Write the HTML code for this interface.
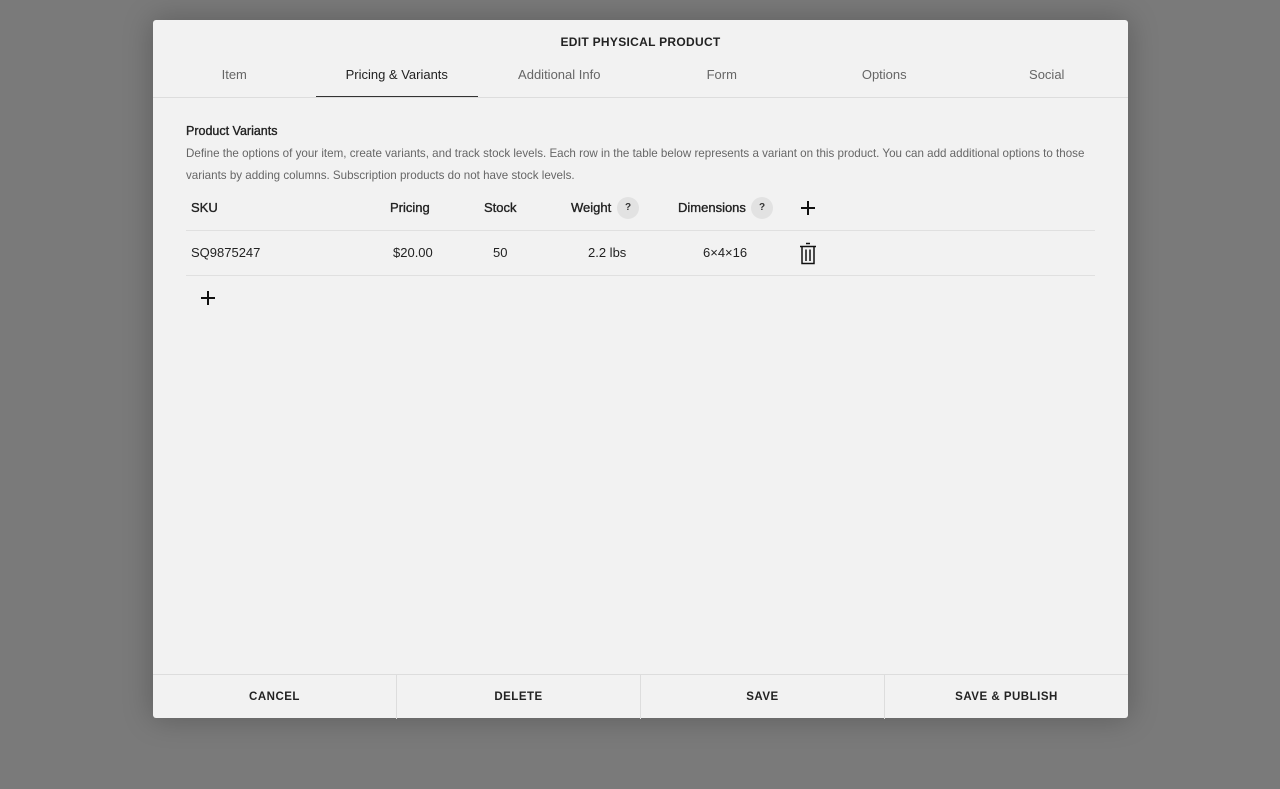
<!DOCTYPE html>
<html><head><style>
body{margin:0;width:1280px;height:789px;background:#7a7a7a;font-family:"Liberation Sans",sans-serif;position:relative;overflow:hidden}
.m{position:absolute;left:153px;top:20px;width:975px;height:698px;background:#f2f2f2;border-radius:3px;box-shadow:0 0 30px rgba(0,0,0,.25)}
.t{position:absolute;top:15px;left:0;width:100%;text-align:center;font-size:12px;font-weight:bold;letter-spacing:.3px;color:#222}
.tabs{position:absolute;top:47px;left:0;width:100%;display:flex;border-bottom:1px solid #ddd;height:30px}
.tabs div{flex:1;text-align:center;font-size:13px;color:#666}
.tabs .a{color:#222;border-bottom:1.5px solid #333}
.ab{position:absolute;font-size:13px;color:#222}
.h{position:absolute;left:33px;top:104px;font-size:12.5px;color:#222;-webkit-text-stroke:.35px #222}
.d{position:absolute;left:33px;top:123px;width:920px;font-size:11.6px;line-height:22px;color:#666}
.hr{position:absolute;left:33px;width:909px;height:1px;background:#e0e0e0}
.hd{-webkit-text-stroke:.35px #222}
.q{position:absolute;width:22px;height:22px;border-radius:50%;background:#e2e2e2;font-size:10px;font-weight:bold;text-align:center;line-height:22px;color:#333}
.f{position:absolute;left:0;top:654px;width:100%;height:44px;border-top:1px solid #ddd;display:flex}
.f div{flex:1;text-align:center;line-height:44px;font-size:11.5px;font-weight:bold;letter-spacing:.5px;color:#222;border-left:1px solid #ddd}
.f div:first-child{border-left:0}
</style></head><body>
<div class="m">
<div class="t">EDIT PHYSICAL PRODUCT</div>
<div class="tabs"><div>Item</div><div class="a">Pricing &amp; Variants</div><div>Additional Info</div><div>Form</div><div>Options</div><div>Social</div></div>
<div class="h">Product Variants</div>
<div class="d">Define the options of your item, create variants, and track stock levels. Each row in the table below represents a variant on this product. You can add additional options to those variants by adding columns. Subscription products do not have stock levels.</div>
<div class="ab hd" style="left:38px;top:180px">SKU</div>
<div class="ab hd" style="left:237px;top:180px">Pricing</div>
<div class="ab hd" style="left:331px;top:180px">Stock</div>
<div class="ab hd" style="left:418px;top:180px">Weight</div>
<div class="q" style="left:464px;top:177px">?</div>
<div class="ab hd" style="left:525px;top:180px">Dimensions</div>
<div class="q" style="left:598px;top:177px">?</div>
<svg style="position:absolute;left:647px;top:180px" width="16" height="16"><path d="M8 1V15M1 8H15" stroke="#111" stroke-width="2"/></svg>
<div class="hr" style="top:210px"></div>
<div class="ab" style="left:38px;top:225px">SQ9875247</div>
<div class="ab" style="left:240px;top:225px">$20.00</div>
<div class="ab" style="left:340px;top:225px">50</div>
<div class="ab" style="left:435px;top:225px">2.2 lbs</div>
<div class="ab" style="left:550px;top:225px">6×4×16</div>
<svg style="position:absolute;left:646px;top:222px" width="18" height="23"><path d="M7 1.5H11M1 4.5H17M3 4.5V21.5H15V4.5M7 7.5V19M11 7.5V19" stroke="#111" stroke-width="1.5" fill="none"/></svg>
<div class="hr" style="top:255px"></div>
<svg style="position:absolute;left:47px;top:270px" width="16" height="16"><path d="M8 1V15M1 8H15" stroke="#111" stroke-width="2"/></svg>
<div class="f"><div>CANCEL</div><div>DELETE</div><div>SAVE</div><div>SAVE &amp; PUBLISH</div></div>
</div>
</body></html>
